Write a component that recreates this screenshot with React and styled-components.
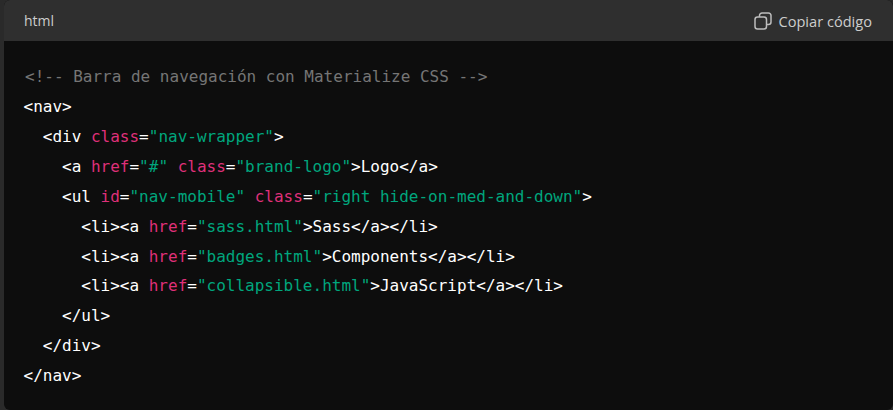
import styled, { createGlobalStyle } from 'styled-components';

const GlobalStyle = createGlobalStyle`
  html, body {
    margin: 0;
    padding: 0;
    background: #2a2a2a;
  }
`;

const Tag = styled.span`
  color: #ffffff;
`;

const Attr = styled.span`
  color: #df3079;
`;

const Str = styled.span`
  color: #00a67d;
`;

const Comment = styled.span`
  margin-left: 1.5px;
  color: #757575;
`;

const lines = [
  { indent: 0, parts: [[Comment, '<!-- Barra de navegación con Materialize CSS -->']] },
  { indent: 0, parts: [[Tag, '<nav>']] },
  { indent: 2, parts: [[Tag, '<div '], [Attr, 'class'], [Tag, '='], [Str, '"nav-wrapper"'], [Tag, '>']] },
  { indent: 4, parts: [[Tag, '<a '], [Attr, 'href'], [Tag, '='], [Str, '"#"'], [Tag, ' '], [Attr, 'class'], [Tag, '='], [Str, '"brand-logo"'], [Tag, '>Logo</a>']] },
  { indent: 4, parts: [[Tag, '<ul '], [Attr, 'id'], [Tag, '='], [Str, '"nav-mobile"'], [Tag, ' '], [Attr, 'class'], [Tag, '='], [Str, '"right hide-on-med-and-down"'], [Tag, '>']] },
  { indent: 6, parts: [[Tag, '<li><a '], [Attr, 'href'], [Tag, '='], [Str, '"sass.html"'], [Tag, '>Sass</a></li>']] },
  { indent: 6, parts: [[Tag, '<li><a '], [Attr, 'href'], [Tag, '='], [Str, '"badges.html"'], [Tag, '>Components</a></li>']] },
  { indent: 6, parts: [[Tag, '<li><a '], [Attr, 'href'], [Tag, '='], [Str, '"collapsible.html"'], [Tag, '>JavaScript</a></li>']] },
  { indent: 4, parts: [[Tag, '</ul>']] },
  { indent: 2, parts: [[Tag, '</div>']] },
  { indent: 0, parts: [[Tag, '</nav>']] },
];

const CopyIcon = () => (
  <svg width="18" height="18" viewBox="0 0 18 18" fill="none" stroke="#bdbdbd" strokeWidth="1.5">
    <rect x="1" y="5" width="11.5" height="12" rx="2.5" />
    <path d="M5.5 5V3.5A2.5 2.5 0 0 1 8 1h6.5A2.5 2.5 0 0 1 17 3.5V10a2.5 2.5 0 0 1-2.5 2.5h-2" />
  </svg>
);

const App = () => (
  <>
    <GlobalStyle />
    <Card>
      <Header>
        <Language>html</Language>
        <CopyButton>
          <CopyIcon />
          Copiar código
        </CopyButton>
      </Header>
      <Code>
        {lines.map((line, i) => (
          <Line key={i}>
            {' '.repeat(line.indent)}
            {line.parts.map(([Part, text], j) => (
              <Part key={j}>{text}</Part>
            ))}
          </Line>
        ))}
      </Code>
    </Card>
  </>
);

export default App;

const Card = styled.div`
  width: 889px;
  height: 410px;
  margin-left: 4px;
  border-radius: 6px;
  overflow: hidden;
  background: #0d0d0d;
  display: flex;
  flex-direction: column;
`;

const Header = styled.div`
  height: 41px;
  background: #2f2f2f;
  display: flex;
  align-items: center;
  justify-content: space-between;
  padding: 0 21px 0 20px;
  font-family: 'Open Sans', 'Liberation Sans', sans-serif;
  font-size: 14px;
  color: #cdcdcd;
`;

const Language = styled.span`
  display: block;
`;

const CopyButton = styled.div`
  display: flex;
  align-items: center;
  gap: 6px;
  font-size: 14.6px;
`;

const Code = styled.pre`
  margin: 0;
  padding: 21px 21px 0 19.5px;
  font-family: 'DejaVu Sans Mono', 'Liberation Mono', monospace;
  font-size: 16px;
  line-height: 29.93px;
  color: #ffffff;
`;

const Line = styled.div`
  height: 29.93px;
  white-space: pre;
`;
